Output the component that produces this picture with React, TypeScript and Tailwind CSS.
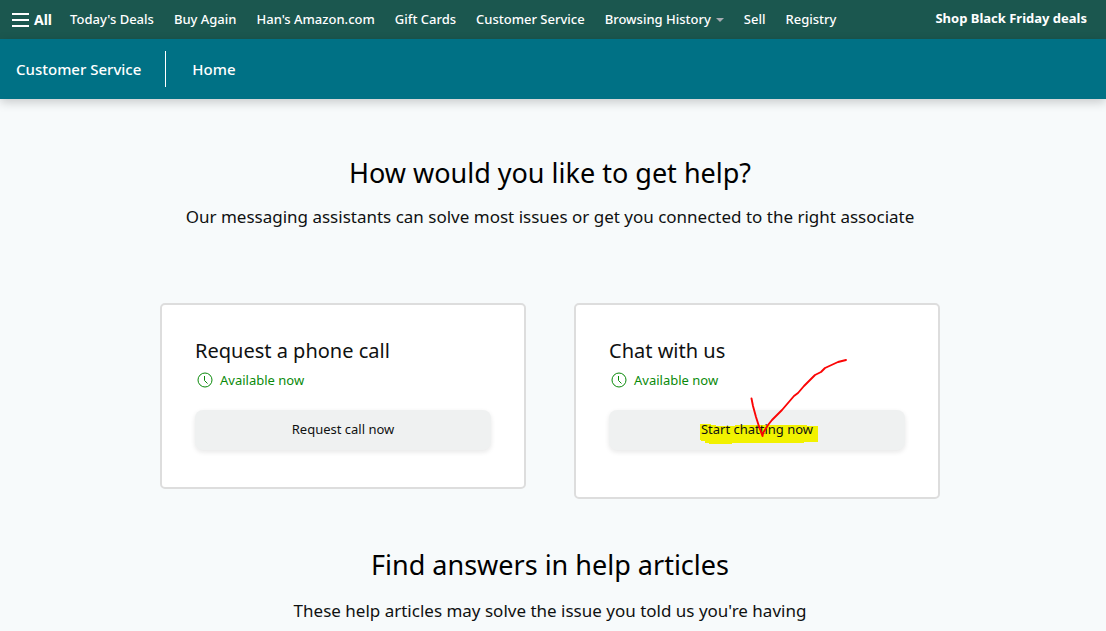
import type { ReactNode } from 'react';

const navLinks = ["Today's Deals", 'Buy Again', "Han's Amazon.com", 'Gift Cards', 'Customer Service'];

function ClockIcon() {
    return (
        <svg className="size-4" viewBox="0 0 16 16" fill="none" stroke="currentColor" aria-hidden="true">
            <circle cx="8" cy="8" r="7" />
            <path d="M7.5 4v4.5L10.5 11.5" />
        </svg>
    );
}

function TopNav() {
    return (
        <nav className="flex h-[39px] items-center whitespace-nowrap bg-[#1b574f] pl-3 pr-[19px] text-[13px] font-medium text-white">
            <button type="button" className="flex items-center gap-[5px] text-sm font-bold">
                <svg width="17" height="14" viewBox="0 0 17 14" fill="currentColor" aria-hidden="true">
                    <path d="M0 0h17v2H0zM0 6h17v2H0zM0 12h17v2H0z" />
                </svg>
                All
            </button>
            <div className="ml-[18px] flex items-center gap-5">
                {navLinks.map((label) => (
                    <a key={label} href="#">
                        {label}
                    </a>
                ))}
                <button type="button" className="flex items-center gap-[5px]">
                    Browsing History
                    <svg width="8" height="4" viewBox="0 0 8 4" fill="#a7acb2" aria-hidden="true">
                        <path d="M0 0h8L4 4z" />
                    </svg>
                </button>
                <a href="#">Sell</a>
                <a href="#">Registry</a>
            </div>
            <a href="#" className="ml-auto pb-[2px] font-bold">
                Shop Black Friday deals
            </a>
        </nav>
    );
}

function SubNav() {
    return (
        <header className="relative flex h-[60px] items-center bg-[#007185] pl-4 text-[15px] font-medium leading-6 text-white shadow-[0_3px_10px_rgba(0,0,0,0.2)]">
            <a href="#" className="border-r border-white py-[6px] pr-6">
                Customer Service
            </a>
            <a href="#" className="ml-[26px]">
                Home
            </a>
        </header>
    );
}

type ContactCardProps = {
    title: string;
    action: string;
    className: string;
    children?: ReactNode;
};

function ContactCard({ title, action, className, children }: ContactCardProps) {
    return (
        <section className={`flex-1 rounded-[5px] border-2 border-[#dddddd] bg-white px-[33px] pt-8 ${className}`}>
            <h2 className="text-xl leading-7">{title}</h2>
            <p className="mt-[5px] flex items-center gap-[7px] pl-[2px] text-[13px] leading-5 text-[#0a8a0a]">
                <ClockIcon />
                Available now
            </p>
            <button
                type="button"
                className="relative mt-5 h-10 w-full rounded-lg bg-[#eff1f1] text-[13px] shadow-[0_2px_5px_rgba(15,17,17,0.1)]"
            >
                {children}
                <span className="relative">{action}</span>
            </button>
        </section>
    );
}

function Highlight() {
    return (
        <svg
            className="absolute left-1/2 top-[13px] -ml-[57px]"
            width="118"
            height="22"
            viewBox="0 0 118 22"
            fill="#f2f200"
            aria-hidden="true"
        >
            <path d="M0 1h11v1h5v1h19v-1h72v1h11v16h-14v1H32v1H9v-1H5v-2H1v-1H0z" />
        </svg>
    );
}

function CheckMark() {
    return (
        <svg
            className="pointer-events-none absolute left-1/2 -top-[52px] z-10 -ml-[7px]"
            width="98"
            height="82"
            viewBox="0 0 98 82"
            fill="none"
            stroke="#fb0505"
            strokeWidth="1.9"
            strokeLinecap="round"
            strokeLinejoin="round"
            aria-hidden="true"
        >
            <path d="M1.500 40.500L3 48L6 59L9.500 70L12.500 78L13 75L18 67L22 62L32 52L44 38L48 35L54 28L65 17L71 14L75 10L88 4L96 2" />
        </svg>
    );
}

export default function App() {
    return (
        <div className="min-h-screen bg-[#f7fafb] font-['Noto_Sans','Open_Sans',sans-serif] text-[#0f1111]">
            <TopNav />
            <SubNav />
            <main className="pr-[6px] pt-14 text-center">
                <h1 className="text-[27px] leading-9 text-black">How would you like to get help?</h1>
                <p className="mt-[14px] text-[17px] leading-6">
                    Our messaging assistants can solve most issues or get you connected to the right associate
                </p>
                <div className="mx-auto mt-[74px] flex max-w-[780px] items-start gap-12 text-left">
                    <ContactCard title="Request a phone call" action="Request call now" className="pb-[37px]" />
                    <ContactCard title="Chat with us" action="Start chatting now" className="pb-[47px]">
                        <Highlight />
                        <CheckMark />
                    </ContactCard>
                </div>
                <h1 className="mt-12 text-[27px] leading-9 text-black">Find answers in help articles</h1>
                <p className="mt-4 text-[17px] leading-6">
                    These help articles may solve the issue you told us you're having
                </p>
            </main>
        </div>
    );
}
